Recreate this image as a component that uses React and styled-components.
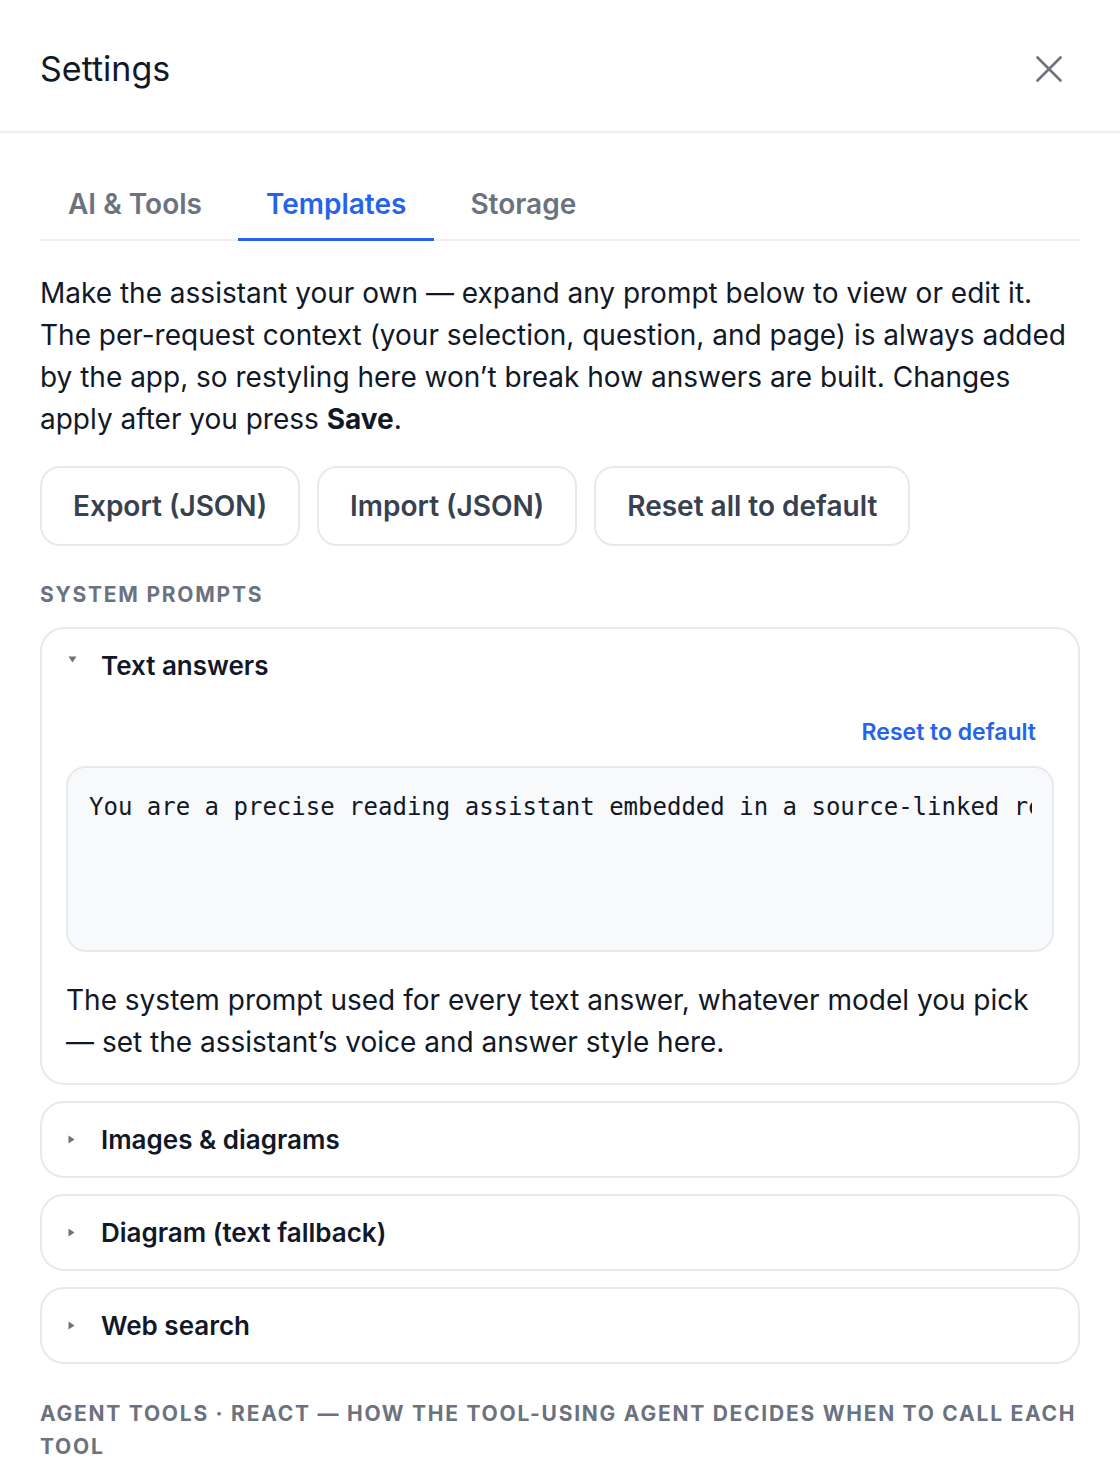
import React from 'react';
import styled, { createGlobalStyle } from 'styled-components';

const GlobalStyle = createGlobalStyle`
  body {
    margin: 0;
    background: #ffffff;
    font-family: Inter, "Noto Sans", sans-serif;
    color: #111827;
  }
  * { box-sizing: border-box; }
`;

const Panel = styled.div`
  width: 1120px;
  background: #ffffff;
`;

const Header = styled.header`
  display: flex;
  align-items: center;
  justify-content: space-between;
  height: 133px;
  padding: 6px 40px 0;
  border-bottom: 2px solid #eceef1;
`;

const Title = styled.h1`
  margin: 0;
  font-size: 34px;
  font-weight: 400;
  color: #111827;
`;

const CloseButton = styled.button`
  display: flex;
  padding: 18px;
  border: 0;
  background: none;
  color: #6b7280;
  cursor: pointer;
`;

const Body = styled.div`
  padding: 41px 40px 0;
`;

const Tabs = styled.nav`
  display: flex;
  gap: 8px;
  border-bottom: 2px solid #eef0f3;
`;

const Tab = styled.button`
  padding: 12px 28px 16px;
  margin-bottom: -2px;
  border: 0;
  border-bottom: 3px solid ${p => (p.$active ? '#2563eb' : 'transparent')};
  background: none;
  font-family: inherit;
  font-size: 28px;
  font-weight: 600;
  line-height: 36px;
  color: ${p => (p.$active ? '#2563eb' : '#6b7280')};
  cursor: pointer;
`;

const Intro = styled.p`
  margin: 31px 0 0;
  font-size: 28px;
  line-height: 42px;
  color: #111827;
`;

const Actions = styled.div`
  display: flex;
  gap: 17px;
  margin-top: 26px;
`;

const ActionButton = styled.button`
  height: 80px;
  padding: 0 31px;
  border: 2px solid #e7e9ed;
  border-radius: 20px;
  background: #ffffff;
  font-family: inherit;
  font-size: 28px;
  font-weight: 600;
  color: #374151;
  cursor: pointer;
`;

const SectionLabel = styled.h2`
  margin: ${p => p.$top || '32px'} 0 16px;
  font-size: 21px;
  font-weight: 700;
  line-height: 33px;
  letter-spacing: 1.75px;
  text-transform: uppercase;
  color: #6b7280;
`;

const List = styled.div`
  display: flex;
  flex-direction: column;
  gap: 16px;
`;

const Card = styled.div`
  border: 2px solid #e7e9ed;
  border-radius: 24px;
  background: #ffffff;
`;

const Summary = styled.button`
  display: flex;
  align-items: center;
  width: 100%;
  padding: 18px 24px;
  border: 0;
  background: none;
  font-family: inherit;
  font-size: 26px;
  font-weight: 600;
  line-height: 37px;
  color: #111827;
  text-align: left;
  cursor: pointer;
`;

const Marker = styled.span`
  display: flex;
  width: 35px;
  padding-left: ${p => (p.$open ? '2px' : '1px')};
  align-self: ${p => (p.$open ? 'flex-start' : 'center')};
  margin-top: ${p => (p.$open ? '8px' : '0')};
  color: #6b7280;
`;

const CardBody = styled.div`
  padding: 12px 24px 20px;
`;

const ResetRow = styled.div`
  display: flex;
  justify-content: flex-end;
`;

const LinkButton = styled.button`
  padding: 0 18px;
  border: 0;
  background: none;
  font-family: inherit;
  font-size: 23px;
  font-weight: 600;
  line-height: 36px;
  color: #2563eb;
  cursor: pointer;
`;

const PromptBox = styled.div`
  height: 186px;
  margin-top: 16px;
  padding: 21px 20px 21px 21px;
  border: 2px solid #e7e9ed;
  border-radius: 20px;
  background: #f8f9fb;
`;

const PromptArea = styled.textarea`
  display: block;
  width: 100%;
  height: 100%;
  padding: 0;
  border: 0;
  background: transparent;
  font-family: "DejaVu Sans Mono", "Liberation Mono", monospace;
  font-size: 24px;
  line-height: 36px;
  color: #111827;
  white-space: pre;
  overflow: hidden;
  resize: none;
  outline: none;
`;

const Hint = styled.p`
  margin: 27px 0 0;
  font-size: 28px;
  line-height: 42px;
  color: #111827;
`;

const Triangle = ({ open }) => (
  <svg width="9" height="9" viewBox="0 0 9 9" fill="currentColor">
    {open ? <path d="M0.5 1.5h8L4.5 7.5z" /> : <path d="M1.5 0.5v8L7.5 4.5z" />}
  </svg>
);

const prompts = [
  {
    title: 'Text answers',
    open: true,
    value:
      'You are a precise reading assistant embedded in a source-linked reader. Answer using the provided context.',
    hint:
      'The system prompt used for every text answer, whatever model you pick — set the assistant’s voice and answer style here.',
  },
  { title: 'Images & diagrams' },
  { title: 'Diagram (text fallback)' },
  { title: 'Web search' },
];

export default function App() {
  return (
    <Panel>
      <GlobalStyle />
      <Header>
        <Title>Settings</Title>
        <CloseButton aria-label="Close">
          <svg width="26" height="26" viewBox="0 0 26 26" fill="none" stroke="currentColor" strokeWidth="2.6" strokeLinecap="round">
            <path d="M1.5 1.5l23 23M24.5 1.5l-23 23" />
          </svg>
        </CloseButton>
      </Header>
      <Body>
        <Tabs>
          <Tab>AI &amp; Tools</Tab>
          <Tab $active>Templates</Tab>
          <Tab>Storage</Tab>
        </Tabs>
        <Intro>
          Make the assistant your own — expand any prompt below to view or edit it. The
          per-request context (your selection, question, and page) is always added by the app,
          so restyling here won’t break how answers are built. Changes apply after you press{' '}
          <strong>Save</strong>.
        </Intro>
        <Actions>
          <ActionButton>Export (JSON)</ActionButton>
          <ActionButton>Import (JSON)</ActionButton>
          <ActionButton>Reset all to default</ActionButton>
        </Actions>
        <SectionLabel>System prompts</SectionLabel>
        <List>
          {prompts.map(p => (
            <Card key={p.title}>
              <Summary>
                <Marker $open={p.open}>
                  <Triangle open={p.open} />
                </Marker>
                {p.title}
              </Summary>
              {p.open && (
                <CardBody>
                  <ResetRow>
                    <LinkButton>Reset to default</LinkButton>
                  </ResetRow>
                  <PromptBox>
                    <PromptArea wrap="off" readOnly defaultValue={p.value} />
                  </PromptBox>
                  <Hint>{p.hint}</Hint>
                </CardBody>
              )}
            </Card>
          ))}
        </List>
        <SectionLabel $top="33px">
          Agent tools · ReAct — how the tool-using agent decides when to call each tool
        </SectionLabel>
      </Body>
    </Panel>
  );
}
